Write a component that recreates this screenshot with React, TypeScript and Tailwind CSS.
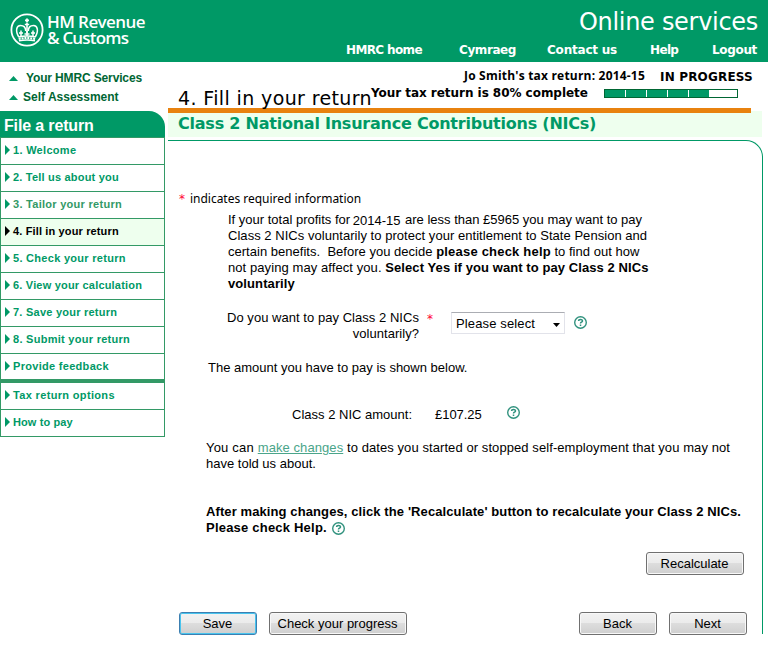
import type { ReactNode } from "react";

const steps = [
  { label: "1. Welcome", spacing: "tracking-[0.3px]" },
  { label: "2. Tell us about you", spacing: "tracking-[0.2px]" },
  { label: "3. Tailor your return", spacing: "tracking-[0.28px]", tone: "text-[#339966]" },
  { label: "4. Fill in your return", spacing: "tracking-[0.14px]", active: true },
  { label: "5. Check your return", spacing: "tracking-[0.29px]" },
  { label: "6. View your calculation", spacing: "tracking-[0.19px]" },
  { label: "7. Save your return", spacing: "tracking-[0.24px]" },
  { label: "8. Submit your return", spacing: "tracking-[0.28px]" },
  { label: "Provide feedback", spacing: "tracking-[0.3px]", last: true },
  { label: "Tax return options", spacing: "tracking-[0.34px]" },
  { label: "How to pay", spacing: "tracking-[0.1px]" },
];

function Crest() {
  return (
    <svg width="34" height="34" viewBox="0 0 34 34" fill="none" stroke="#fff" className="shrink-0">
      <circle cx="17" cy="17" r="15.6" strokeWidth="1.8" />
      <path d="M17 5.500v4M15 7.300h4" strokeWidth="1.8" />
      <path d="M8.800 24C5 17.500 6.500 12.500 10.500 12.500c3 0 5.200 1.500 5.200 5.500M25.200 24c3.800-6.500 2.300-11.500-1.700-11.500-3 0-5.200 1.500-5.200 5.500" strokeWidth="1.500" />
      <path d="M17 10v10M14.800 11.500h4.400" strokeWidth="1.600" />
      <path d="M11 17.500v6M9 20h4M23 17.500v6M21 20h4M17 18v5M14.500 21h5" strokeWidth="1.500" />
      <path d="M8.500 24q8.500-2 17 0M9 27.800q8-1.600 16 0" strokeWidth="1.400" />
      <path d="M8.700 26q8.300-2 16.600 0" strokeWidth="2" strokeDasharray="2 0.900" />
    </svg>
  );
}

function HelpIcon() {
  return (
    <svg width="13" height="13" viewBox="0 0 13 13" fill="none" stroke="#31927e" className="shrink-0">
      <circle cx="6.5" cy="6.5" r="5.8" strokeWidth="1.4" />
      <path d="M4.600 5.100C4.600 2.900 8.500 2.900 8.500 5c0 1.200-2 1.200-2 2.400M6.500 8.500v1.400" strokeWidth="1.5" />
    </svg>
  );
}

function Required({ className }: { className: string }) {
  return (
    <span className={`font-['DejaVu_Sans',Verdana,sans-serif] text-[12px] text-[#ff0033] ${className}`}>*</span>
  );
}

function Button({ children, className, primary }: { children: ReactNode; className: string; primary?: boolean }) {
  return (
    <button
      className={`h-[23px] rounded-[3px] border bg-[linear-gradient(#f2f2f2_0%,#ebebeb_49%,#dddddd_50%,#cfcfcf_100%)] pr-px text-[13px] leading-[21px] whitespace-nowrap ${
        primary
          ? "border-[#3c7fb1] shadow-[inset_0_0_0_1px_#48c4ee]"
          : "border-[#707070] shadow-[inset_0_0_0_1px_#f8f8f8]"
      } ${className}`}
    >
      {children}
    </button>
  );
}

function UpLink({ children, className }: { children: ReactNode; className: string }) {
  return (
    <a className="flex h-[19px] items-center pl-[9px]">
      <svg width="9" height="5" viewBox="0 0 9 5" className="mt-[2px]">
        <path d="M0 5 4.500 0 9 5z" fill="#009966" />
      </svg>
      <span className={`font-bold whitespace-nowrap text-[#006633] ${className}`}>{children}</span>
    </a>
  );
}

export default function App() {
  return (
    <div className="h-[652px] w-[775px] overflow-hidden bg-white font-['Liberation_Sans',Arial,sans-serif] text-[13px] leading-[16px] text-black">
      <header className="flex h-[62px] w-[768px] justify-between bg-[#009966] text-white">
        <div className="flex pt-[13px] pl-[10px]">
          <Crest />
          <div className="mt-px ml-[3px] font-['Open_Sans',sans-serif] text-[17px] leading-[16px] font-semibold whitespace-nowrap">
            <div className="tracking-[-0.58px]">HM Revenue</div>
            <div className="tracking-[-0.8px]">&amp; Customs</div>
          </div>
        </div>
        <div className="font-['DejaVu_Sans',Verdana,sans-serif]">
          <div className="mt-[8px] mr-[10px] h-[28px] text-right text-[24px] leading-[28px] tracking-[-0.3px] whitespace-nowrap">Online services</div>
          <nav className="mt-[7px] flex h-[15px] text-[12px] leading-[15px] font-bold whitespace-nowrap">
            <a className="w-[113px] tracking-[-0.63px]">HMRC home</a>
            <a className="w-[88px] tracking-[-0.41px]">Cymraeg</a>
            <a className="w-[103px] tracking-[-0.21px]">Contact us</a>
            <a className="w-[62px] tracking-[-0.65px]">Help</a>
            <a className="w-[56px] tracking-[-0.33px]">Logout</a>
          </nav>
        </div>
      </header>

      <div className="flex w-[768px]">
        <aside className="w-[165px] shrink-0">
          <div className="h-[49px] pt-[6px]">
            <UpLink className="ml-[8px] text-[12px] tracking-[-0.14px]">Your HMRC Services</UpLink>
            <UpLink className="ml-[5px] text-[12px]">Self Assessment</UpLink>
          </div>
          <h2 className="h-[26px] rounded-tr-[16px] bg-[#009966] pt-[5px] pl-[4px] text-[16px] leading-[19px] font-bold tracking-[-0.15px] text-white">File a return</h2>
          <ul className="border border-[#339966]">
            {steps.map((s, i) => (
              <li
                key={s.label}
                className={`flex items-start pt-[5px] pl-[4px] ${
                  i === steps.length - 1 ? "h-[26px]" : s.last ? "h-[29px] border-b-[4px] border-[#339966]" : "h-[27px] border-b border-[#339966]"
                } ${s.active ? "bg-[#eeffee] text-black" : s.tone ?? "text-[#009966]"}`}
              >
                <svg width="5" height="10" viewBox="0 0 5 10" className="mt-[2px]">
                  <path d="M0 0 5 5 0 10z" fill={s.active ? "#000000" : "#009966"} />
                </svg>
                <span className={`ml-[3px] text-[11px] leading-[14px] font-bold whitespace-nowrap ${s.spacing}`}>{s.label}</span>
              </li>
            ))}
          </ul>
        </aside>

        <main className="ml-[3px] w-[595px] shrink-0">
          <div className="flex h-[46px] font-['DejaVu_Sans',Verdana,sans-serif]">
            <h1 className="w-[203px] shrink-0 pt-[24px] pl-[10px] text-[19px] leading-[24px] tracking-[0.37px] whitespace-nowrap">4. Fill in your return</h1>
            <div className="text-[12px] font-bold whitespace-nowrap">
              <div className="flex h-[17px] pt-[6px] pl-[93px]">
                <span className="w-[196px] font-['Open_Sans',sans-serif] tracking-[0.2px]">Jo Smith's tax return: 2014-15</span>
                <span className="pt-px tracking-[0.18px]">IN PROGRESS</span>
              </div>
              <div className="flex items-start pt-[6px]">
                <span className="w-[233px] tracking-[-0.04px]">Your tax return is 80% complete</span>
                <div className="mt-[4px] flex h-[9px] w-[134px] border border-[#006633]">
                  {[0, 1, 2, 3].map((n) => (
                    <span key={n} className="w-[21px] border-r border-white bg-[#009966]" />
                  ))}
                  <span className="w-[20px] bg-[#009966]" />
                </div>
              </div>
            </div>
          </div>
          <div className="h-[3px] w-[583px] bg-[#e8820f]" />
          <div className="h-[26px] w-[594px] bg-[#eeffee]">
            <div className="h-[2px] w-[583px] bg-[#e8820f]" />
            <h2 className="pt-px pl-[10px] font-['DejaVu_Sans',Verdana,sans-serif] text-[16px] leading-[20px] font-bold tracking-[-0.23px] whitespace-nowrap text-[#009966]">
              Class 2 National Insurance Contributions (NICs)
            </h2>
          </div>

          <section className="mt-[3px] h-[494px] rounded-tr-[17px] border-t border-r border-[#009966] pt-[50px] pl-[11px] whitespace-nowrap">
            <div className="flex h-[16px]">
              <Required className="w-[11px]" />
              <span className="font-['Noto_Sans',sans-serif] text-[12px] tracking-[-0.02px]">indicates required information</span>
            </div>
            <div className="mt-[5px] ml-[49px]">
              <div>
                If your total profits for <span className="relative top-px -left-px">2014-15</span> are less than £5965 you may want to pay
              </div>
              <div className="tracking-[0.04px]">Class 2 NICs voluntarily to protect your entitlement to State Pension and</div>
              <div className="tracking-[0.02px]">
                certain benefits.&nbsp; Before you decide <b className="tracking-[0.2px]">please check help</b> to find out how
              </div>
              <div className="tracking-[0.08px]">
                not paying may affect you. <b>Select Yes if you want to pay Class 2 NICs</b>
              </div>
              <div className="font-bold tracking-[0.1px]">voluntarily</div>
            </div>
            <div className="mt-[18px] flex h-[32px]">
              <label className="w-[240px] text-right tracking-[0.04px]">
                Do you want to pay Class 2 NICs
                <br />
                voluntarily?
              </label>
              <Required className="mt-px ml-[8px] w-[24px]" />
              <div className="mt-[2px] flex h-[22px] w-[114px] items-center justify-between border border-[#e2e3ea] border-t-[#abadb3] px-[4px]">
                <span className="pt-px tracking-[0.13px]">Please select</span>
                <svg width="7" height="4" viewBox="0 0 7 4" className="mt-[3px]">
                  <path d="M0 0h7L3.500 4z" />
                </svg>
              </div>
              <div className="mt-[6px] ml-[9px]">
                <HelpIcon />
              </div>
            </div>
            <p className="mt-[18px] ml-[29px]">The amount you have to pay is shown below.</p>
            <div className="mt-[31px] flex h-[16px]">
              <span className="w-[233px] text-right">Class 2 NIC amount:</span>
              <span className="ml-[23px] w-[72px] tracking-[-0.04px]">£107.25</span>
              <div className="-mt-px">
                <HelpIcon />
              </div>
            </div>
            <div className="mt-[17px] ml-[27px]">
              <div className="tracking-[0.08px]">
                <span className="tracking-[0.2px]">You can </span>
                <a className="text-[#4aa58a] underline">make changes</a> to dates you started or stopped self-employment that you may not
              </div>
              <div>have told us about.</div>
            </div>
            <div className="mt-[32px] ml-[27px] font-bold">
              <div className="tracking-[0.1px]">After making changes, click the 'Recalculate' button to recalculate your Class 2 NICs.</div>
              <div className="flex h-[16px] tracking-[0.21px]">
                <span className="w-[126px]">Please check Help.</span>
                <div className="mt-[2px]">
                  <HelpIcon />
                </div>
              </div>
            </div>
            <div className="mt-[16px] flex pl-[467px]">
              <Button className="w-[98px]">Recalculate</Button>
            </div>
            <div className="mt-[37px] flex">
              <Button className="w-[78px]" primary>Save</Button>
              <Button className="ml-[12px] w-[138px]">Check your progress</Button>
              <Button className="ml-[172px] w-[78px]">Back</Button>
              <Button className="ml-[12px] w-[78px]">Next</Button>
            </div>
          </section>
        </main>
      </div>
    </div>
  );
}
